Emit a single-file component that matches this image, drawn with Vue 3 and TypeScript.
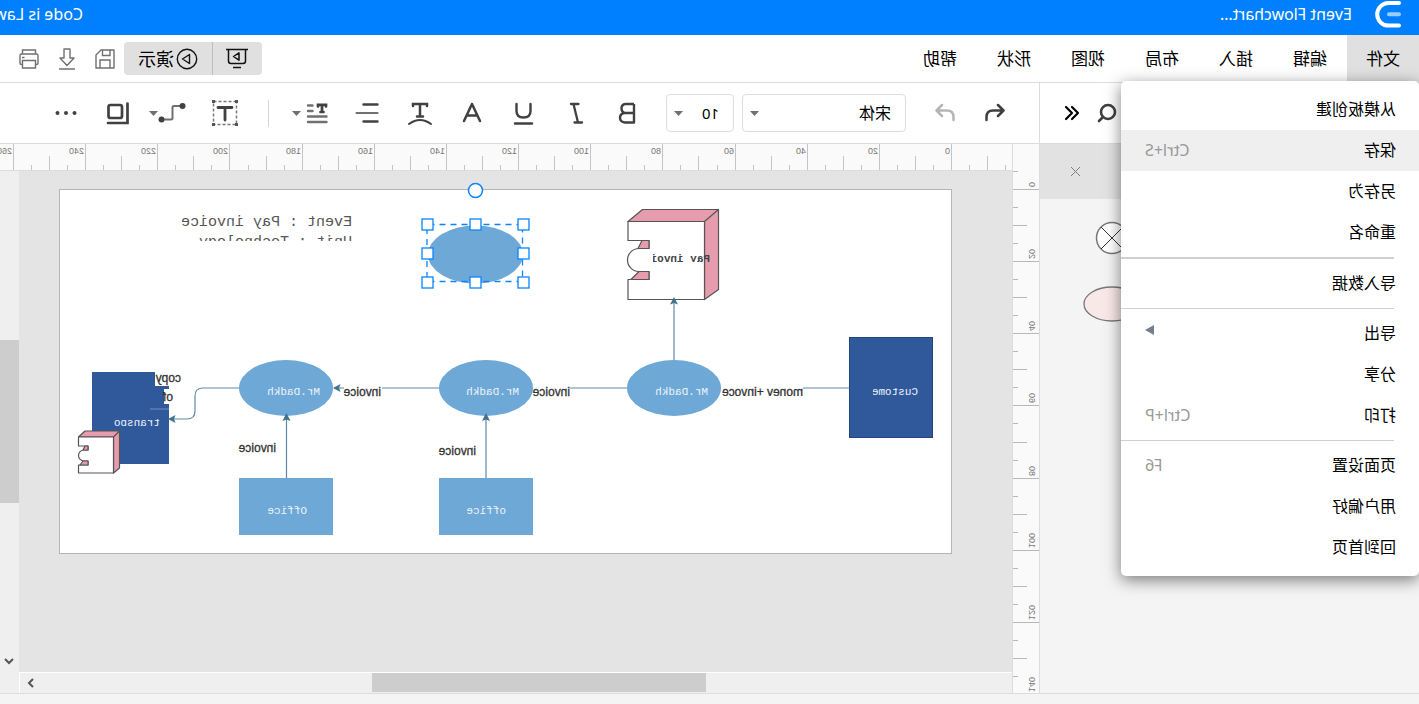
<script setup lang="ts">
import { ref } from 'vue'

interface Tick { at: number; size: 'full' | 'half' | 'quarter'; label: string }
interface Entry { label: string; hint?: string; sub?: boolean; active?: boolean }

const menus = ['编辑', '插入', '布局', '视图', '形状', '帮助']

const fileMenu: Entry[][] = [
  [{ label: '从模板创建' }, { label: '保存', hint: 'Ctrl+S', active: true }, { label: '另存为' }, { label: '重命名' }],
  [{ label: '导入数据' }],
  [{ label: '导出', sub: true }, { label: '分享' }, { label: '打印', hint: 'Ctrl+P' }],
  [{ label: '页面设置', hint: 'F6' }, { label: '用户偏好' }, { label: '回到首页' }],
]

const UNIT = 72.15
function ticks(origin: number, from: number, to: number): Tick[] {
  const list: Tick[] = []
  for (let q = from; q <= to; q++) {
    const major = q % 4 === 0
    list.push({
      at: Math.round(origin + (q * UNIT) / 4),
      size: major ? 'full' : q % 2 === 0 ? 'half' : 'quarter',
      label: major ? String(Math.abs(q * 5)) : '',
    })
  }
  return list
}
const start = { full: 0, half: 12, quarter: 21 }
const across = ticks(60, -4, 56)
const down = ticks(45, -1, 28)

const font = ref('宋体')
const size = ref('10')
const scrollX = { left: '30.8%', width: '33.7%' }
const scrollY = { top: '32.4%', height: '31.2%' }

const handles = [
  [895, 224], [943, 224], [991, 224],
  [895, 253], [991, 253],
  [895, 282], [943, 282], [991, 282],
]
const people = [
  { x: 745, text: 711 },
  { x: 933, text: 900 },
  { x: 1133, text: 1099 },
]
</script>

<template>
  <div class="app">
    <header class="title-bar">
      <svg class="logo" width="26" height="28" viewBox="0 0 26 28" aria-hidden="true">
        <path d="M2 3H12.5A11.3 11.3 0 0 1 12.500 25.600H2" fill="none" stroke="#fff" stroke-width="4" stroke-linecap="round" />
        <path d="M2 14.300H12" stroke="#99ccff" stroke-width="4" stroke-linecap="round" />
      </svg>
      <span class="doc">Event Flowchart...</span>
      <span class="user">Code is Law</span>
    </header>

    <div class="menu-bar">
      <nav class="menus" aria-label="主菜单">
        <div class="file">
          <button class="menu current" type="button" aria-haspopup="menu" aria-expanded="true">文件</button>
          <div class="dropdown" role="menu">
            <div v-for="(group, g) in fileMenu" :key="g" class="group" :class="{ strong: g === 1 }">
              <button v-for="e in group" :key="e.label" class="entry" :class="{ active: e.active }" type="button" role="menuitem">
                <span>{{ e.label }}</span>
                <span v-if="e.hint" class="hint">{{ e.hint }}</span>
                <svg v-if="e.sub" class="more" width="9" height="10" viewBox="0 0 9 10" aria-hidden="true"><path d="M0 0L9 5L0 10Z" fill="#76808b" /></svg>
              </button>
            </div>
          </div>
        </div>
        <button v-for="m in menus" :key="m" class="menu" type="button">{{ m }}</button>
      </nav>

      <div class="present">
        <button type="button" class="screen" aria-label="放映">
          <svg width="22" height="21" viewBox="0 0 22 21" fill="none" stroke="#111" stroke-width="1.5">
            <path d="M0 1.500H22M2.500 1.500V13Q2.500 15.500 5 15.500H17Q19.500 15.500 19.500 13V1.500M7 19.500H15" />
            <path d="M9 4.800V12.200L14.500 8.500Z" stroke-linejoin="round" />
          </svg>
        </button>
        <button type="button" class="play">
          <svg width="22" height="22" viewBox="0 0 22 22" fill="none" stroke="#111" stroke-width="1.4" aria-hidden="true">
            <circle cx="11" cy="11" r="9.700" />
            <path d="M8.500 6.500V15.500L15.500 11Z" stroke-linejoin="round" />
          </svg>
          <span>演示</span>
        </button>
      </div>
      <div class="file-tools">
        <button type="button" aria-label="保存">
          <svg width="20" height="20" viewBox="0 0 20 20" fill="none" stroke="#707070" stroke-width="1.4">
            <path d="M1 1H14L19 6V19H1Z" stroke-linejoin="round" />
            <path d="M5 1V6.500H12.500V1M5 19V11H15V19" />
          </svg>
        </button>
        <button type="button" aria-label="下载">
          <svg width="18" height="22" viewBox="0 0 18 22" fill="none" stroke="#707070" stroke-width="1.400">
            <path d="M6 1H12V10H16L9 17.500L2 10H6ZM1 21H17" stroke-linejoin="round" />
          </svg>
        </button>
        <button type="button" aria-label="打印">
          <svg width="20" height="20" viewBox="0 0 20 20" fill="none" stroke="#707070" stroke-width="1.400">
            <path d="M3.500 5V1H16.500V5M3.500 15.500H2.500Q1 15.500 1 14V6.500Q1 5 2.500 5H17.500Q19 5 19 6.500V14Q19 15.500 17.500 15.500H16.500M3.500 11.500H16.500V19H3.500ZM14.500 8.500H17" />
          </svg>
        </button>
      </div>
    </div>

    <main class="main">
      <aside class="library">
        <div class="library-head">
          <button type="button" aria-label="搜索">
            <svg width="20" height="20" viewBox="0 0 20 20" fill="none" stroke="#3f3f3f" stroke-width="2.600" stroke-linecap="round"><circle cx="9" cy="9" r="7" /><path d="M14.500 14.500L18 18" /></svg>
          </button>
          <button type="button" aria-label="收起">
            <svg width="16" height="16" viewBox="0 0 16 16" fill="none" stroke="#000" stroke-width="2.200" stroke-linecap="round" stroke-linejoin="round"><path d="M8 2L2 8L8 14M14 2L8 8L14 14" /></svg>
          </button>
        </div>
        <div class="library-tab">
          <button type="button" aria-label="关闭">
            <svg width="11" height="11" viewBox="0 0 11 11" stroke="#808080"><path d="M1 1L10 10M10 1L1 10" /></svg>
          </button>
        </div>
        <div class="shapes">
          <svg width="60" height="34" viewBox="0 0 60 34" fill="none" stroke="#777">
            <circle cx="30" cy="17" r="15.500" fill="#fff" stroke-width="1.500" />
            <path d="M19 6L41 28M41 6L19 28" stroke="#333" />
          </svg>
          <svg width="60" height="36" viewBox="0 0 60 36"><ellipse cx="30" cy="18" rx="28" ry="17" fill="#f9e8e8" stroke="#777" stroke-width="1.300" /></svg>
        </div>
      </aside>

      <section class="editor">
        <div class="toolbar">
          <button class="tool history" type="button" aria-label="撤销">
            <svg width="20" height="20" viewBox="0 0 20 20" fill="none" stroke="#3f3f3f" stroke-width="2.500" stroke-linecap="round" stroke-linejoin="round"><path d="M7 2L1.500 7.500L7 13M2 7.500H12Q18.500 7.500 18.500 14V17" /></svg>
          </button>
          <button class="tool history" type="button" aria-label="重做">
            <svg width="20" height="20" viewBox="0 0 20 20" fill="none" stroke="#b5b5b5" stroke-width="2.500" stroke-linecap="round" stroke-linejoin="round"><path d="M13 2L18.500 7.500L13 13M18 7.500H8Q1.500 7.500 1.500 14V17" /></svg>
          </button>
          <label class="pick family">
            <select v-model="font" aria-label="字体"><option>宋体</option></select>
            <svg class="caret" width="9" height="5" viewBox="0 0 9 5"><path d="M0 0H9L4.500 5Z" fill="#707070" /></svg>
          </label>
          <label class="pick size">
            <select v-model="size" aria-label="字号"><option>10</option></select>
            <svg class="caret" width="9" height="5" viewBox="0 0 9 5"><path d="M0 0H9L4.500 5Z" fill="#707070" /></svg>
          </label>
          <div class="format">
            <button class="tool" type="button" aria-label="加粗">
              <svg width="22" height="24" viewBox="0 0 22 24" fill="none" stroke="#414141" stroke-width="2.400" stroke-linejoin="round"><path d="M4 3H12.500Q16.500 3.500 16.500 7.300Q16.500 11.500 12.500 12H4M4 12H13Q18 12.500 18 16.800Q18 21 13 21.500H4V3" /></svg>
            </button>
            <button class="tool" type="button" aria-label="斜体">
              <svg width="22" height="24" viewBox="0 0 22 24" fill="none" stroke="#414141" stroke-width="2.300" stroke-linecap="round"><path d="M7.500 3H15M4 21.500H11.500M12.500 3L8 21.500" /></svg>
            </button>
            <button class="tool" type="button" aria-label="下划线">
              <svg width="22" height="24" viewBox="0 0 22 24" fill="none" stroke="#414141" stroke-width="2.400" stroke-linecap="round"><path d="M3.500 3V10Q3.500 16.500 10.500 16.500Q17.500 16.500 17.500 10V3M2 22.500H19" /></svg>
            </button>
            <button class="tool" type="button" aria-label="文字颜色">
              <svg width="22" height="24" viewBox="0 0 22 24" fill="none" stroke="#414141" stroke-width="2.500" stroke-linecap="round" stroke-linejoin="round"><path d="M2 20L10 3L18 20M5 14.500H15" /></svg>
            </button>
            <button class="tool" type="button" aria-label="文字弧度">
              <svg width="26" height="26" viewBox="0 0 26 26" fill="none" stroke="#414141" stroke-width="2.500" stroke-linecap="round"><path d="M5 6V4H19V6M12 4V16M9 16.500H15" /><path d="M1 24Q12 16 23 24" stroke-width="2" /></svg>
            </button>
            <button class="tool" type="button" aria-label="对齐">
              <svg width="24" height="24" viewBox="0 0 24 24" fill="none" stroke="#414141" stroke-width="2.400" stroke-linecap="round"><path d="M1.500 3.500H15.500M1.500 20.500H15.500" /><path d="M1.500 12H22.500" stroke="#707070" stroke-width="2.200" /></svg>
            </button>
            <button class="tool split" type="button" aria-label="行距">
              <svg width="22" height="24" viewBox="0 0 22 24" fill="none" stroke="#414141" stroke-width="2.700"><path d="M2 5.500V3.800H10V5.500M6 4V11M4.500 11H7.500" stroke-linecap="round" /><path d="M15.500 4.500H20M15.500 10H20M1.500 15.500H20M1.500 21H20" stroke="#707070" stroke-width="2.400" stroke-linecap="round" /></svg>
              <svg width="9" height="5" viewBox="0 0 9 5"><path d="M0 0H9L4.500 5Z" fill="#707070" /></svg>
            </button>
          </div>
          <span class="rule"></span>
          <div class="insert">
            <button class="tool" type="button" aria-label="文本框">
              <svg width="26" height="26" viewBox="0 0 26 26" fill="none" stroke="#414141"><rect x="1.500" y="1.500" width="23" height="23" stroke="#777" stroke-width="1.500" stroke-dasharray="3 2" /><path d="M6 7.500H20M13 7.500V20" stroke-width="2.800" stroke-linecap="round" /><path d="M0 0H3V3H0ZM23 0H26V3H23ZM0 23H3V26H0ZM23 23H26V26H23Z" fill="#555" stroke="none" /></svg>
            </button>
            <button class="tool split link" type="button" aria-label="连接线">
              <svg width="28" height="22" viewBox="0 0 28 22" fill="none"><path d="M3 4H12Q13.500 4 13.500 5.500V16Q13.500 17.500 15 17.500H24" stroke="#707070" stroke-width="2" /><circle cx="3.500" cy="4" r="3" fill="#414141" /><circle cx="24.500" cy="17.500" r="3" fill="#414141" /></svg>
              <svg width="9" height="5" viewBox="0 0 9 5"><path d="M0 0H9L4.500 5Z" fill="#707070" /></svg>
            </button>
            <button class="tool layers" type="button" aria-label="图层">
              <svg width="23" height="23" viewBox="0 0 23 23" fill="none" stroke="#414141" stroke-width="2.700" stroke-linecap="round"><rect x="7" y="3" width="13.500" height="13" rx="2" /><path d="M1.500 1.500V21H21" /></svg>
            </button>
            <button class="tool dots" type="button" aria-label="更多">
              <svg width="22" height="6" viewBox="0 0 22 6" fill="#414141"><circle cx="2.500" cy="3" r="2" /><circle cx="11" cy="3" r="2" /><circle cx="19.500" cy="3" r="2" /></svg>
            </button>
          </div>
        </div>

        <div class="workspace">
          <svg class="ruler-y" aria-hidden="true">
            <template v-for="t in down" :key="t.at">
              <rect :x="start[t.size]" :y="t.at" :width="26 - start[t.size]" height="1" fill="#b8b8b8" />
              <text v-if="t.label" :transform="`translate(10 ${t.at - 2}) rotate(-90)`">{{ t.label }}</text>
            </template>
          </svg>
          <svg class="ruler-x" aria-hidden="true">
            <template v-for="t in across" :key="t.at">
              <rect :x="t.at" :y="start[t.size]" width="1" :height="26 - start[t.size]" fill="#c4c4c4" />
              <text v-if="t.label" :x="t.at + 2" y="10">{{ t.label }}</text>
            </template>
          </svg>

          <div class="stage">
            <svg width="993" height="501" viewBox="407 171 993 501" role="img" aria-label="Event Flowchart">
              <defs>
                <clipPath id="c-unit"><rect x="1060" y="230" width="200" height="11" /></clipPath>
                <clipPath id="c-pay"><rect x="700" y="250" width="66" height="12" /></clipPath>
                <clipPath id="c-cust"><rect x="490" y="380" width="56" height="16" /></clipPath>
                <clipPath id="c-trans"><rect x="1250" y="410" width="60" height="16" /></clipPath>
                <clipPath id="c-money"><rect x="610" y="380" width="100" height="16" /></clipPath>
              </defs>
              <rect x="467.500" y="189.500" width="892" height="364" fill="#fff" stroke="#b5b5b5" />

              <g class="heading">
                <text x="1067" y="226">Event : Pay invoice</text>
                <text x="1067" y="246" clip-path="url(#c-unit)">Unit : Technology</text>
              </g>

              <g fill="none" stroke="#6189a6" stroke-width="1.200">
                <path d="M570 388H616M792 388H849M980 388H1037M1075 388H1085M745 360V303M933 478V418M1132.500 478V418" />
                <path d="M1180 388H1216Q1224 388 1224 396V411Q1224 419 1232 419H1246" />
              </g>

              <rect x="486.500" y="337.500" width="83" height="100" fill="#30599c" stroke="#20457f" />
              <text class="node" x="501" y="395" clip-path="url(#c-cust)">Custome</text>

              <g stroke="#555" stroke-width="1.200" stroke-linejoin="round">
                <path d="M714.500 221.500L700.500 209.500V289.500L714.500 299.500ZM714.500 221.500L700.500 209.500H776.500L791 221.500Z" fill="#e79cae" />
                <path d="M714.500 221.500H791V240.500H770V248.500H780A11.500 11.500 0 0 1 780 271.500H770V279.500H791V299.500H714.500Z" fill="#fff" />
                <path d="M770 240.500H777L781 248.500H770ZM770 271.500H780L788 279.500H770Z" fill="#e79cae" />
              </g>
              <text class="node pay" x="709" y="262" clip-path="url(#c-pay)">Pay invoi</text>

              <g v-for="p in people" :key="p.x">
                <ellipse :cx="p.x" cy="388" rx="47" ry="28" fill="#6ea8d6" />
                <text class="node" :x="p.text" y="395">Mr.Dadkh</text>
              </g>
              <rect x="886" y="478" width="94" height="57" fill="#6ea8d6" />
              <text class="node" x="913" y="514">office</text>
              <rect x="1086" y="478" width="94" height="57" fill="#6ea8d6" />
              <text class="node" x="1112" y="514">Office</text>

              <rect x="1250" y="372" width="77" height="92" fill="#30599c" />
              <path d="M1237 370H1264V386H1250V389H1255V404H1237Z" fill="#fff" />
              <path d="M1250 409H1269" stroke="#7590c0" />
              <text class="node" x="1259" y="426" clip-path="url(#c-trans)">transpo</text>

              <g stroke="#555" stroke-width="1.200" stroke-linejoin="round">
                <path d="M1305.500 437L1299.500 431V468L1305.500 473ZM1305.500 437L1299.500 431H1334L1340.500 437Z" fill="#e79cae" />
                <path d="M1305.500 437H1340.500V446H1331V450H1335A5.500 5.500 0 0 1 1335 461H1331V465H1340.500V473H1305.500Z" fill="#fff" />
                <path d="M1331 446H1334L1336 450H1331ZM1331 461H1336L1339 465H1331Z" fill="#e79cae" />
              </g>

              <g fill="#41718f">
                <path d="M745 297L749 304.500L745 303L741 304.500Z" />
                <path d="M933 413L937 421L933 419.500L929 421Z" />
                <path d="M1132.500 413L1136.500 421L1132.500 419.500L1128.500 421Z" />
                <path d="M1086 388L1078.500 392L1080 388L1078.500 384Z" />
                <path d="M1251 419L1243.500 423L1245 419L1243.500 415Z" />
              </g>

              <g class="flow">
                <text x="616" y="396" clip-path="url(#c-money)">money +invoce</text>
                <text x="849" y="396">invoice</text>
                <text x="1038" y="396">invoice</text>
                <text x="943" y="455">invoice</text>
                <text x="1143" y="452">invoice</text>
                <text x="1238" y="382">copy</text>
                <text x="1246" y="401">of</text>
              </g>

              <ellipse cx="943.500" cy="254.500" rx="47.500" ry="29" fill="#6ea8d6" />
              <g fill="#fff" stroke="#0a84ff" stroke-width="1.300">
                <rect x="896.500" y="224.500" width="95.500" height="57" fill="none" stroke-dasharray="6 5" />
                <rect v-for="(h, i) in handles" :key="i" :x="h[0] - 5" :y="h[1] - 5" width="11" height="11" />
                <circle cx="943.500" cy="190.500" r="7" stroke-width="1.500" />
              </g>
            </svg>
          </div>

          <div class="track-y">
            <div class="thumb" :style="scrollY"></div>
            <svg class="down" width="10" height="7" viewBox="0 0 10 7" fill="none" stroke="#555" stroke-width="2"><path d="M1 1L5 5L9 1" /></svg>
          </div>
          <div class="track-x">
            <div class="thumb" :style="scrollX"></div>
            <svg class="next" width="7" height="10" viewBox="0 0 7 10" fill="none" stroke="#555" stroke-width="2"><path d="M1 1L5 5L1 9" /></svg>
          </div>
        </div>
      </section>
    </main>
    <footer class="status"></footer>
  </div>
</template>

<style>
body {
  margin: 0;
  overflow: hidden;
}
</style>

<style scoped>
/* The whole interface is presented mirrored, right to left. */
.app {
  display: flex;
  flex-direction: column;
  height: 100vh;
  overflow: hidden;
  transform: scaleX(-1);
  background: #f4f4f4;
  color: #000;
  font: 16px/24px "Noto Sans", "Noto Sans CJK SC", sans-serif;
}
.app * {
  box-sizing: border-box;
}
button {
  display: flex;
  align-items: center;
  justify-content: center;
  padding: 0;
  border: 0;
  background: none;
  color: inherit;
  font: inherit;
  cursor: pointer;
}
svg {
  display: block;
  flex: none;
}

.title-bar {
  display: flex;
  align-items: center;
  flex: none;
  height: 35px;
  padding: 0 0 7px 18px;
  background: #0080ff;
  color: #fff;
  white-space: nowrap;
}
.doc {
  margin-left: 23px;
}
.user {
  width: 83px;
  margin-left: auto;
}

.menu-bar {
  display: flex;
  align-items: center;
  flex: none;
  height: 48px;
  padding-right: 10px;
  border-bottom: 1px solid #dcdcdc;
  background: #fff;
}
.menus {
  display: flex;
  align-self: stretch;
}
.file {
  position: relative;
  display: flex;
}
.menu {
  width: 74px;
  font-size: 17px;
}
.menu.current {
  width: 72px;
  background: #e0e0e0;
}
.dropdown {
  position: absolute;
  z-index: 5;
  top: 46px;
  left: 0;
  width: 298px;
  padding: 8px 0;
  border-radius: 5px;
  background: #fff;
  box-shadow: 0 4px 16px rgba(0, 0, 0, 0.5);
}
.group + .group::before {
  content: "";
  display: block;
  height: 1px;
  margin: 4px 0 4px 25px;
  background: #d0d0d0;
}
.group.strong::before {
  height: 2px;
}
.entry {
  justify-content: space-between;
  width: 100%;
  height: 41px;
  padding: 0 24px 2px 23px;
}
.entry.active {
  background: #efefef;
}
.hint {
  color: #999;
}
.more {
  margin: 0 0 6px;
}
.present {
  display: flex;
  height: 33px;
  margin-left: auto;
  border-radius: 4px;
  background: #e0e0e0;
}
.screen {
  width: 50px;
  border-right: 1px solid #bdbdbd;
}
.play {
  gap: 2px;
  width: 88px;
  font-size: 18px;
}
.file-tools {
  display: flex;
}
.file-tools button {
  width: 38px;
  height: 33px;
}

.main {
  display: flex;
  flex: 1;
  min-height: 0;
}
.library {
  display: flex;
  flex-direction: column;
  flex: none;
  width: 380px;
  border-right: 1px solid #dcdcdc;
}
.library-head {
  display: flex;
  align-items: center;
  justify-content: flex-end;
  gap: 17px;
  height: 61px;
  padding-right: 24px;
  border-bottom: 1px solid #dcdcdc;
  background: #fff;
}
.library-tab {
  display: flex;
  align-items: center;
  justify-content: flex-end;
  height: 55px;
  padding-right: 30px;
  background: #e2e2e2;
}
.shapes {
  display: flex;
  flex-direction: column;
  align-items: flex-end;
  gap: 31px;
  padding: 22px 42px 0 0;
}

.editor {
  display: flex;
  flex-direction: column;
  flex: 1;
  min-width: 0;
}
.toolbar {
  display: flex;
  align-items: center;
  flex: none;
  height: 61px;
  padding: 0 54px 0 19px;
  border-bottom: 1px solid #dcdcdc;
  background: #fff;
}
.history {
  width: 50px;
}
.pick {
  position: relative;
  display: flex;
  align-items: center;
  height: 38px;
  border: 1px solid #dedede;
  border-radius: 4px;
}
.pick select {
  width: 100%;
  height: 100%;
  padding: 0 14px;
  border: 0;
  background: none;
  appearance: none;
  color: #000;
  font: inherit;
}
.pick .caret {
  position: absolute;
  right: 7px;
  pointer-events: none;
}
.family {
  width: 164px;
  margin-left: 14px;
}
.size {
  width: 68px;
  margin-left: 8px;
}
.pick.size select {
  font-size: 15px;
}
.format {
  display: flex;
  margin-left: 13px;
}
.format .tool {
  width: 52px;
  height: 38px;
}
.split {
  justify-content: flex-start;
  gap: 5px;
}
.format .split {
  padding-left: 13px;
}
.rule {
  width: 1px;
  height: 27px;
  margin-left: 20px;
  background: #d5d5d5;
}
.insert {
  display: flex;
  align-items: center;
  margin-left: 30px;
}
.insert .tool {
  height: 38px;
}
.insert .link {
  gap: 0;
  margin-left: 26px;
}
.insert .layers {
  margin-left: 20px;
}
.insert .dots {
  margin-left: 29px;
}

.workspace {
  display: grid;
  grid-template-columns: 27px minmax(0, 1fr) 19px;
  grid-template-rows: 27px minmax(0, 1fr) 21px;
  flex: 1;
  min-height: 0;
}
.ruler-y {
  grid-area: 1 / 1 / 4 / 2;
  width: 27px;
  height: 100%;
  border-right: 1px solid #dcdcdc;
  background: #fafafa;
}
.ruler-x {
  grid-area: 1 / 2 / 2 / 4;
  width: 100%;
  height: 27px;
  border-bottom: 1px solid #dcdcdc;
  background: #fafafa;
}
.ruler-x text,
.ruler-y text {
  fill: #777;
  font: 9px "Liberation Sans", sans-serif;
}
.stage {
  grid-area: 2 / 2 / 3 / 3;
  overflow: hidden;
  background: #e4e4e4;
}
.heading text {
  fill: #555;
  font: 15px "Liberation Mono", monospace;
}
.node {
  fill: #edf4fa;
  font: 11px "Liberation Mono", monospace;
}
.node.pay {
  fill: #444;
  font-weight: bold;
}
.flow text {
  fill: #333;
  stroke: #333;
  stroke-width: 0.3px;
  font: 12px "Liberation Sans", sans-serif;
}
.track-y,
.track-x {
  position: relative;
  background: #efefef;
}
.track-y {
  grid-area: 2 / 3 / 4 / 4;
}
.track-x {
  grid-area: 3 / 2 / 4 / 3;
  border-top: 1px solid #fff;
  border-right: 1px solid #fff;
}
.thumb {
  position: absolute;
  background: #cdcdcd;
}
.track-y .thumb {
  right: 0;
  left: 0;
}
.track-x .thumb {
  top: 0;
  bottom: 1px;
}
.down {
  position: absolute;
  bottom: 28px;
  left: 5px;
}
.next {
  position: absolute;
  top: 5px;
  right: 7px;
}
.status {
  flex: none;
  height: 11px;
  border-top: 1px solid #dcdcdc;
}
</style>
